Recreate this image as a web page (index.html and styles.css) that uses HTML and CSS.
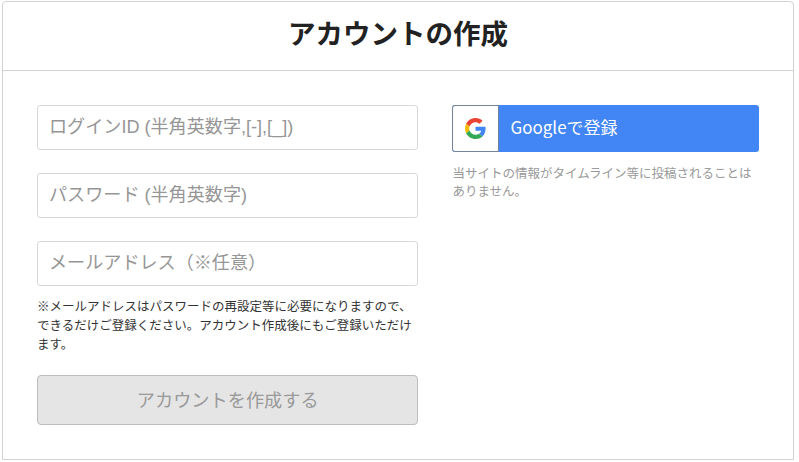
FILE: index.html
```html
<!DOCTYPE html>
<html lang="ja">
<head>
  <meta charset="UTF-8" />
  <meta name="viewport" content="width=device-width, initial-scale=1.0"/>
  <title>アカウントの作成</title>
  <link rel="stylesheet" href="styles.css">
</head>
<body>
  <div class="card">
    <h1 class="card-title">アカウントの作成</h1>

    <div class="card-body">
      <!-- ID registration -->
      <form class="signup-form">
        <input class="text-input" type="text" placeholder="ログインID (半角英数字,[-],[_])" />
        <input class="text-input" type="password" placeholder="パスワード (半角英数字)" />
        <input class="text-input text-input-last" type="text" placeholder="メールアドレス（※任意）" />
        <p class="mail-note">※メールアドレスはパスワードの再設定等に必要になりますので、できるだけご登録ください。アカウント作成後にもご登録いただけます。</p>
        <button class="submit-button" type="button" disabled>アカウントを作成する</button>
      </form>

      <!-- Google registration -->
      <div class="social">
        <a class="google-button" href="#">
          <span class="google-icon">
            <svg width="21" height="21" viewBox="0 0 48 48">
              <path fill="#EA4335" d="M24 9.5c3.54 0 6.71 1.22 9.21 3.6l6.85-6.85C35.9 2.38 30.47 0 24 0 14.62 0 6.51 5.38 2.56 13.22l7.98 6.19C12.43 13.72 17.74 9.5 24 9.5z"/>
              <path fill="#4285F4" d="M46.98 24.55c0-1.57-.15-3.09-.38-4.55H24v9.02h12.94c-.58 2.96-2.26 5.48-4.78 7.18l7.73 6c4.51-4.18 7.09-10.36 7.09-17.65z"/>
              <path fill="#FBBC05" d="M10.53 28.59c-.48-1.45-.76-2.99-.76-4.59s.27-3.14.76-4.59l-7.98-6.19C.92 16.46 0 20.12 0 24c0 3.88.92 7.54 2.56 10.78l7.97-6.19z"/>
              <path fill="#34A853" d="M24 48c6.48 0 11.93-2.13 15.89-5.81l-7.73-6c-2.15 1.45-4.92 2.3-8.16 2.3-6.26 0-11.57-4.22-13.47-9.91l-7.98 6.19C6.51 42.62 14.62 48 24 48z"/>
            </svg>
          </span>
          <span class="google-label">Googleで登録</span>
        </a>
        <p class="social-note">当サイトの情報がタイムライン等に投稿されることはありません。</p>
      </div>
    </div>
  </div>
</body>
</html>
```

FILE: styles.css
```css
* {
  box-sizing: border-box;
}

body {
  margin: 0;
  padding: 1px 5px 0 2px;
  background: white;
  font-family: "Noto Sans CJK JP", "Liberation Sans", sans-serif;
}

.card {
  height: 459px;
  border: 1px solid #d2d2d2;
  border-radius: 4px 4px 0 0;
  background: white;
}

.card-title {
  height: 69px;
  margin: 0;
  border-bottom: 1px solid #d2d2d2;
  color: #222;
  font-size: 27.5px;
  font-weight: bold;
  line-height: 60px;
  text-align: center;
}

.card-body {
  display: flex;
  gap: 34px;
  padding: 34px 34px 0;
}

.signup-form {
  display: flex;
  flex-direction: column;
  width: 382px;
}

.text-input {
  height: 45px;
  margin-bottom: 23px;
  padding: 0 11px;
  border: 1px solid #d8d8d8;
  border-radius: 3px;
  background: white;
  font-family: "Liberation Sans", "Noto Sans CJK JP", sans-serif;
  font-size: 18.1px;
}

.text-input::placeholder {
  color: #969696;
  opacity: 1;
}

.text-input-last {
  margin-bottom: 10px;
}

.mail-note {
  margin: 0;
  color: #333;
  font-size: 12.5px;
  line-height: 19px;
}

.submit-button {
  height: 50px;
  margin-top: 22px;
  padding: 0 0 3px;
  border: 1px solid #bdbdbd;
  border-radius: 4px;
  background: #e5e5e5;
  color: #999;
  font-family: inherit;
  font-size: 18.2px;
}

.social {
  width: 307px;
}

.google-button {
  display: flex;
  align-items: center;
  height: 47px;
  border-radius: 3px;
  background: #4285f4;
  color: white;
  font-size: 17px;
  text-decoration: none;
}

.google-icon {
  display: flex;
  justify-content: center;
  align-items: center;
  width: 47px;
  height: 47px;
  border: 1px solid #75839a;
  border-radius: 3px 0 0 3px;
  background: white;
}

.google-label {
  margin: 0 0 5px 11px;
}

.social-note {
  margin: 12px 0 0;
  color: #999;
  font-size: 12.5px;
  line-height: 18px;
}
```
